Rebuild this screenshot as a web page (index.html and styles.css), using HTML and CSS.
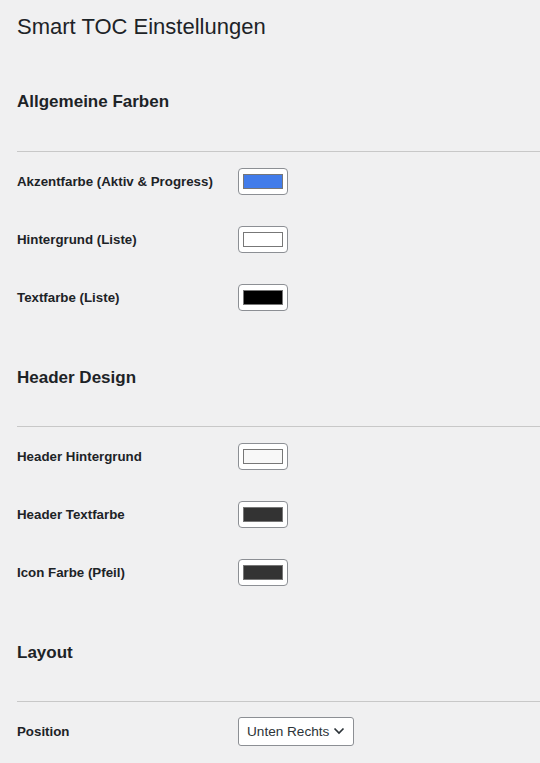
FILE: index.html
```html
<!DOCTYPE html>
<html lang="de">
<head>
<meta charset="utf-8">
<title>Smart TOC Einstellungen</title>
<link rel="stylesheet" href="styles.css">
</head>
<body>
<div class="wrap">
  <h1 class="page-title">Smart TOC Einstellungen</h1>

  <section class="group group-first">
    <h2 class="group-title">Allgemeine Farben</h2>
    <hr class="divider">
    <div class="rows">
      <div class="row"><span class="label">Akzentfarbe (Aktiv &amp; Progress)</span><span class="color-input"><span class="swatch swatch-blue"></span></span></div>
      <div class="row"><span class="label">Hintergrund (Liste)</span><span class="color-input"><span class="swatch swatch-white"></span></span></div>
      <div class="row"><span class="label">Textfarbe (Liste)</span><span class="color-input"><span class="swatch swatch-black"></span></span></div>
    </div>
  </section>

  <section class="group">
    <h2 class="group-title">Header Design</h2>
    <hr class="divider">
    <div class="rows">
      <div class="row"><span class="label">Header Hintergrund</span><span class="color-input"><span class="swatch swatch-offwhite"></span></span></div>
      <div class="row"><span class="label">Header Textfarbe</span><span class="color-input"><span class="swatch swatch-dark"></span></span></div>
      <div class="row"><span class="label">Icon Farbe (Pfeil)</span><span class="color-input"><span class="swatch swatch-dark"></span></span></div>
    </div>
  </section>

  <section class="group">
    <h2 class="group-title">Layout</h2>
    <hr class="divider">
    <div class="rows">
      <div class="row"><span class="label">Position</span>
        <span class="select"><span class="select-text">Unten Rechts</span>
          <svg class="chevron" width="12" height="8" viewBox="0 0 12 8"><polyline points="1.5,1.5 6,6 10.5,1.5" fill="none" stroke="#2c3338" stroke-width="1.7"/></svg>
        </span>
      </div>
    </div>
  </section>
</div>
</body>
</html>
```
FILE: styles.css
```css
html, body {
  margin: 0;
  padding: 0;
  background: #f0f0f1;
}
body {
  font-family: "Liberation Sans", Arial, sans-serif;
  color: #1d2327;
}
.wrap {
  padding: 12px 0 0 17px;
}
.page-title {
  margin: 0;
  font-size: 22px;
  line-height: 29px;
  font-weight: 400;
}
.group {
  margin-top: 41px;
}
.group-first {
  margin-top: 50px;
}
.group-title {
  margin: 0 0 37px;
  font-size: 17px;
  line-height: 22px;
  font-weight: 700;
}
.group-first .group-title {
  margin-bottom: 38px;
}
.divider {
  margin: 0;
  height: 0;
  border: 0;
  border-top: 1px solid #c8c8c8;
}
.row {
  display: grid;
  grid-template-columns: 221px auto;
  align-items: center;
  height: 58px;
}
.label {
  font-size: 13.3px;
  font-weight: 700;
}
.color-input {
  justify-self: start;
  box-sizing: border-box;
  width: 50px;
  height: 27px;
  padding: 5px 4px;
  background: #fff;
  border: 1px solid #8c8f94;
  border-radius: 4px;
  display: flex;
}
.swatch {
  box-sizing: border-box;
  width: 40px;
  height: 15px;
  border: 1px solid #777;
}
.swatch-blue { background: #427cea; }
.swatch-white { background: #ffffff; }
.swatch-black { background: #000000; }
.swatch-offwhite { background: #f8f8f8; }
.swatch-dark { background: #333333; }
.select {
  justify-self: start;
  box-sizing: border-box;
  height: 29px;
  width: 116px;
  padding: 0 8px;
  display: flex;
  align-items: center;
  justify-content: space-between;
  background: #fff;
  border: 1px solid #8c8f94;
  border-radius: 3px;
  color: #2c3338;
  font-size: 13.6px;
}
.chevron {
  display: block;
}
```
